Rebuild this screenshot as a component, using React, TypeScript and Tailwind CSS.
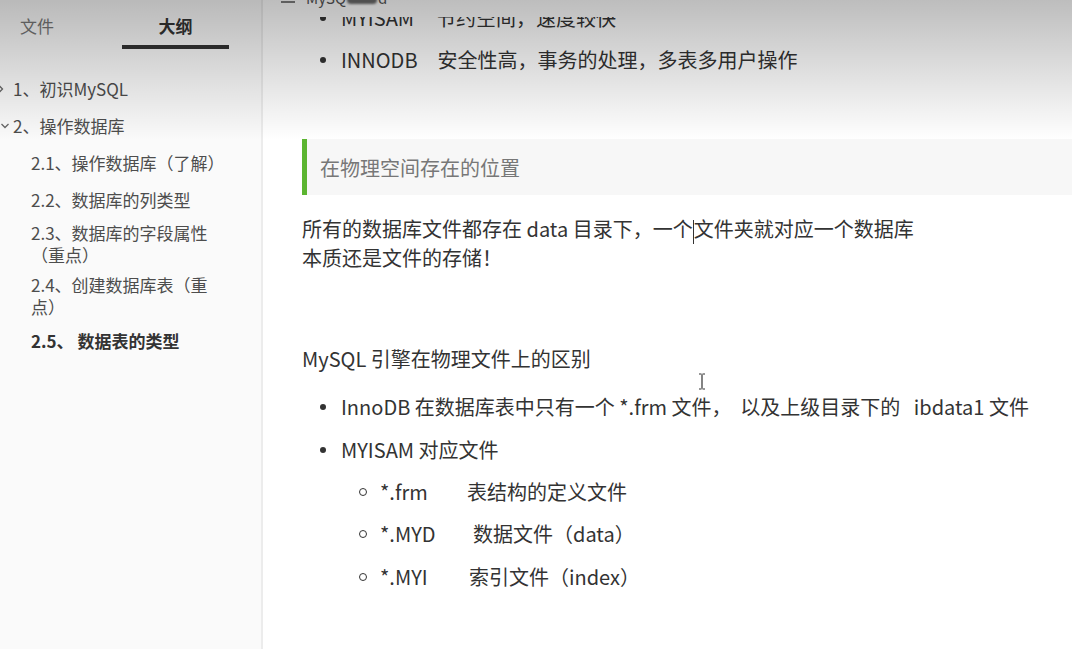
import React from "react";

const font = "font-['Noto_Sans_CJK_SC','Noto_Sans',sans-serif]";

const ChevronRight = () => (
  <svg width="8" height="10" viewBox="0 0 8 10" fill="none">
    <path d="M2 1.5L5.5 5L2 8.5" stroke="#666" strokeWidth="1.3" />
  </svg>
);

const ChevronDown = () => (
  <svg width="10" height="8" viewBox="0 0 10 8" fill="none">
    <path d="M1.5 2L5 5.5L8.5 2" stroke="#666" strokeWidth="1.3" />
  </svg>
);

const outline = [
  { text: "1、初识MySQL", level: 1, icon: "right", mt: "mt-[29px]" },
  { text: "2、操作数据库", level: 1, icon: "down", mt: "mt-[15px]" },
  { text: "2.1、操作数据库（了解）", level: 2, mt: "mt-[15px]" },
  { text: "2.2、数据库的列类型", level: 2, mt: "mt-[15px]" },
  { text: "2.3、数据库的字段属性（重点）", level: 2, mt: "mt-[11px]" },
  { text: "2.4、创建数据库表（重点）", level: 2, mt: "mt-[8px]" },
  { text: "2.5、 数据表的类型", level: 2, mt: "mt-[12px]", active: true },
];

const Sidebar = () => (
  <div className="w-[263px] shrink-0 border-r-2 border-[#ececec] bg-[#fafafa] text-[17px] leading-[22px] text-[#4d4d4d]">
    <div className="flex items-end">
      <div className="pl-5 pt-[14px] pb-[11px] leading-[24px] text-[#777]">文件</div>
      <div className="ml-[68px] w-[107px] border-b-4 border-[#333] pt-[14px] pb-[7px] text-center leading-[24px] font-bold text-[#333]">
        大纲
      </div>
    </div>
    <div className="pr-[32px]">
      {outline.map((o) => (
        <div key={o.text} className={`${o.mt} flex`}>
          {o.level === 1 ? (
            <div className="flex h-[22px] w-[13px] shrink-0 items-center justify-start">
              <div className={o.icon === "right" ? "-ml-[3px]" : "ml-[0px]"}>
                {o.icon === "right" ? <ChevronRight /> : <ChevronDown />}
              </div>
            </div>
          ) : (
            <div className="w-[31px] shrink-0" />
          )}
          <div className={o.active ? "font-bold text-[#333]" : ""}>{o.text}</div>
        </div>
      ))}
    </div>
  </div>
);

const Dot = () => (
  <div className="flex w-[39px] shrink-0 items-center">
    <div className="ml-[18px] h-[6px] w-[6px] rounded-full bg-[#333]" />
  </div>
);

const Circle = () => (
  <div className="flex w-[39px] shrink-0 items-center">
    <div className="ml-[18px] h-[8px] w-[8px] rounded-full border border-[#333]" />
  </div>
);

const Main = () => (
  <div className="flex min-w-0 flex-1 flex-col bg-white text-[20px] leading-[28px] text-[#333]">
    <div className="h-[17px] shrink-0 overflow-hidden">
      <div className="-mt-[12px] flex items-center pl-[18px] text-[15px] leading-[20px] text-[#555]">
        <svg width="14" height="12" viewBox="0 0 14 12" className="mr-[11px]">
          <path d="M0 2H14M0 6H14M0 10H14" stroke="#555" strokeWidth="1.4" />
        </svg>
        <span>MySQ</span>
        <span className="mx-[1px] inline-block h-[12px] w-[30px] rounded-sm bg-[#6a6a6a] blur-[1px]" />
        <span>d *</span>
      </div>
    </div>
    <div className="flex-1 overflow-hidden">
      <div className="-mt-[13px] whitespace-nowrap">
        <div className="pl-[39px]">
          <div className="flex">
            <Dot />
            <span>MYISAM</span>
            <span className="ml-[22px]">节约空间，速度较快</span>
          </div>
          <div className="mt-[14px] flex">
            <Dot />
            <span>INNODB</span>
            <span className="ml-[20px]">安全性高，事务的处理，多表多用户操作</span>
          </div>
        </div>

        <div className="mt-[65px] ml-[39px] border-l-[5px] border-[#5cb531] bg-[#f7f7f7] pt-[15px] pb-[13px] pl-[13px] text-[#777]">
          在物理空间存在的位置
        </div>

        <div className="mt-5 pl-[39px]">
          <div>
            所有的数据库文件都存在 data 目录下，一个
            <span className="inline-block h-[24px] w-px bg-[#333] align-middle" />
            文件夹就对应一个数据库
          </div>
          <div>本质还是文件的存储！</div>
        </div>

        <div className="mt-[73px] pl-[39px]">MySQL 引擎在物理文件上的区别</div>

        <div className="mt-5 pl-[39px]">
          <div className="flex">
            <Dot />
            <span className="whitespace-pre">InnoDB 在数据库表中只有一个 *.frm 文件，  以及上级目录下的   ibdata1 文件</span>
          </div>
          <div className="mt-[15px] flex">
            <Dot />
            <span>MYISAM 对应文件</span>
          </div>
          <div className="pl-[39px]">
            <div className="mt-[14px] flex">
              <Circle />
              <span className="inline-block w-[87px]">*.frm</span>
              <span>表结构的定义文件</span>
            </div>
            <div className="mt-[14px] flex">
              <Circle />
              <span className="inline-block w-[93px]">*.MYD</span>
              <span>数据文件（data）</span>
            </div>
            <div className="mt-[15px] flex">
              <Circle />
              <span className="inline-block w-[89px]">*.MYI</span>
              <span>索引文件（index）</span>
            </div>
          </div>
        </div>
      </div>
    </div>
  </div>
);

export default function App() {
  return (
    <div className={`relative flex h-[649px] w-full overflow-hidden ${font}`}>
      <Sidebar />
      <Main />
      {/* darkened top edge */}
      <div className="pointer-events-none absolute inset-x-0 top-0 h-[140px] bg-linear-to-b from-[rgba(0,0,0,0.26)] to-[rgba(0,0,0,0)]" />
      {/* mouse i-beam */}
      <svg className="pointer-events-none absolute left-[698px] top-[373px]" width="8" height="17" viewBox="0 0 8 17">
        <path d="M1 1H3.5M4.5 1H7M4 1.5V15.5M1 16H3.5M4.5 16H7" stroke="#333" strokeWidth="1.2" fill="none" />
      </svg>
    </div>
  );
}
